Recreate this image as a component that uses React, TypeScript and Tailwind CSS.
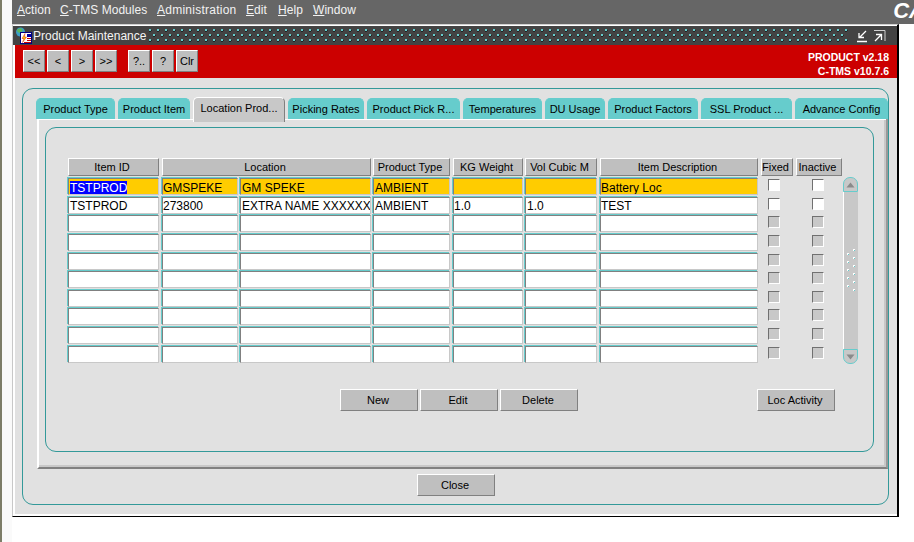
const font = "font-['Liberation_Sans',Arial,sans-serif]";

const menus = [
  { key: "A", rest: "ction", cls: "w-[43px]" },
  { key: "C", rest: "-TMS Modules", cls: "w-[97px]" },
  { key: "A", rest: "dministration", cls: "w-[89px] tracking-[0.25px]" },
  { key: "E", rest: "dit", cls: "w-[32px]" },
  { key: "H", rest: "elp", cls: "w-[35px]" },
  { key: "W", rest: "indow", cls: "w-[50px]" },
];

const navButtons = [
  ["<<", "<", ">", ">>"],
  ["?..", "?", "Clr"],
];

const tabs = [
  { label: "Product Type", cls: "w-[79px] mr-[3px]" },
  { label: "Product Item", cls: "w-[72px] mr-[3px]" },
  { label: "Location Prod...", cls: "w-[92px] mr-[3px]", active: true },
  { label: "Picking Rates", cls: "w-[76px] mr-[3px]" },
  { label: "Product Pick R...", cls: "w-[93px] mr-[3px]" },
  { label: "Temperatures", cls: "w-[79px] mr-[3px]" },
  { label: "DU Usage", cls: "w-[60px] mr-[3px]" },
  { label: "Product Factors", cls: "w-[90px] mr-[3px]" },
  { label: "SSL Product ...", cls: "w-[91px] mr-[3px]" },
  { label: "Advance Config", cls: "w-[93px]" },
];

const columns = [
  { label: "Item ID", cls: "w-[91px] mr-[3px]" },
  { label: "Location", cls: "w-[209px] mr-[2px]" },
  { label: "Product Type", cls: "w-[77px] mr-[3px]" },
  { label: "KG Weight", cls: "w-[70px] mr-[2px]" },
  { label: "Vol Cubic M", cls: "w-[72px] mr-[3px]" },
  { label: "Item Description", cls: "w-[158px] mr-[3px]" },
  { label: "Fixed", cls: "w-[32px] mr-[3px]" },
  { label: "Inactive", cls: "w-[46px]" },
];

const rows = [
  { id: "TSTPROD", code: "GMSPEKE", name: "GM SPEKE", type: "AMBIENT", kg: "", vol: "", desc: "Battery Loc", on: true, current: true },
  { id: "TSTPROD", code: "273800", name: "EXTRA NAME XXXXXXX", type: "AMBIENT", kg: "1.0", vol: "1.0", desc: "TEST", on: true },
  ...Array.from({ length: 8 }, () => ({ id: "", code: "", name: "", type: "", kg: "", vol: "", desc: "", on: false })),
];

const Btn = ({ label, cls }: { label: string; cls: string }) => (
  <button
    type="button"
    className={`flex items-center justify-center whitespace-nowrap border-t border-l border-t-white border-l-white border-b border-r border-b-[#808080] border-r-[#808080] bg-[#bfbfbf] text-[11px] leading-none text-black ${cls}`}
  >
    {label}
  </button>
);

const Cell = ({ text, current, highlight, cls }: { text: string; current?: boolean; highlight?: boolean; cls: string }) => (
  <div
    className={`h-[17px] overflow-hidden whitespace-nowrap border-t border-l border-t-[#808080] border-l-[#808080] border-r border-b border-r-[#c8c8c8] border-b-[#c8c8c8] text-[12px] leading-[15px] text-black shadow-[-1px_-1px_0_#66cccc] ${highlight ? "bg-[#ffcc00] pt-[2px]" : "bg-white pt-[1px]"} ${cls}`}
  >
    {current ? <span className="bg-[#0000ff] text-white">{text}</span> : text}
  </div>
);

const Check = ({ on, cls }: { on: boolean; cls: string }) => (
  <div className={`flex h-[17px] justify-center ${cls}`}>
    <div
      className={`mt-[1px] h-[12px] w-[12px] border-t border-l border-t-[#707070] border-l-[#707070] border-r border-b border-r-white border-b-white ${on ? "bg-white" : "bg-[#c8c8c8]"}`}
    />
  </div>
);

const ScrollEnd = ({ up }: { up?: boolean }) => (
  <div
    className={`flex h-[15px] w-[15px] items-center justify-center border border-[#66cccc] bg-[#c8c8c8] ${up ? "rounded-t-[7px] border-b-[#66cccc]" : "rounded-b-[7px]"}`}
  >
    <svg width="9" height="6" viewBox="0 0 9 6">
      <path d={up ? "M4.5 0.5 L8.5 5.5 L0.5 5.5 Z" : "M0.5 0.5 L8.5 0.5 L4.5 5.5 Z"} fill="#8a8a8a" />
    </svg>
  </div>
);

export default function App() {
  return (
    <div className={`${font} flex h-[542px] w-[914px] overflow-hidden bg-white`}>
      {/* desktop edge */}
      <div className="h-full w-[2px] bg-[#7d7d68]" />
      <div className="h-full w-[10px] bg-[#fafafa]" />

      <div className="flex min-w-0 flex-1 flex-col">
        {/* menu bar */}
        <div className="flex h-[24px] items-start overflow-hidden bg-[#666666] pl-[5px] pt-[3px] text-[12px] leading-[14px] tracking-[0.05px] text-[#f2f2f2]">
          {menus.map((m) => (
            <span key={m.key + m.rest} className={m.cls}>
              <span className="underline">{m.key}</span>
              {m.rest}
            </span>
          ))}
          <span className="ml-auto mr-[-11px] mt-[-4px] text-[22px] font-bold italic leading-[24px] tracking-[0px] text-white">
            CA
          </span>
        </div>

        {/* product maintenance window */}
        <div className="flex h-[493px] w-[887px] flex-col border-t border-l border-t-[#d0d0d0] border-l-[#c8c8c8] border-r-2 border-b border-r-black border-b-black bg-[#e1e1e1] shadow-[inset_2px_0_0_#ffffff,inset_0_-2px_0_#ffffff]">
          <div className="flex h-[20px] items-center border-t border-t-white bg-[#434343] pl-[2px] pr-[3px]">
            <svg width="17" height="18" viewBox="0 0 17 18" className="shrink-0">
              <circle cx="5.5" cy="5" r="4.5" fill="#3a9fc8" />
              <path d="M2 2.5 L6 1 L8 3.5 L5 6 L2.5 5 Z" fill="#5cb85c" />
              <rect x="5.5" y="5.5" width="11" height="11" fill="#ffffff" stroke="#000080" />
              <path d="M10 6.5 L7 11.5 L9 11.5 L7.5 15.5 L11.5 10 L9.5 10 Z" fill="#ffcc00" stroke="#cc0000" strokeWidth="0.4" />
              <rect x="12" y="7" width="4" height="3" fill="#0000aa" />
              <rect x="12" y="11" width="4" height="1" fill="#cc0000" />
              <rect x="12" y="13" width="4" height="1" fill="#cc0000" />
              <rect x="9" y="15" width="7" height="1" fill="#cc0000" />
            </svg>
            <span className="ml-[1px] w-[125px] whitespace-nowrap text-[12px] leading-none text-[#f4f4f4]">
              Product Maintenance
            </span>
            <svg className="h-[14px] w-[699px] shrink-0" aria-hidden="true">
              <defs>
                <pattern id="grip" width="8" height="14" patternUnits="userSpaceOnUse">
                  <rect x="0" y="0" width="2" height="2" fill="#66cccc" />
                  <rect x="2" y="1" width="1" height="1" fill="#222222" />
                  <rect x="0" y="2" width="2" height="1" fill="#222222" />
                  <rect x="4" y="5" width="2" height="2" fill="#66cccc" />
                  <rect x="6" y="6" width="1" height="1" fill="#222222" />
                  <rect x="4" y="7" width="2" height="1" fill="#222222" />
                  <rect x="0" y="10" width="2" height="2" fill="#66cccc" />
                  <rect x="2" y="11" width="1" height="1" fill="#222222" />
                  <rect x="0" y="12" width="2" height="1" fill="#222222" />
                </pattern>
              </defs>
              <rect width="699" height="14" fill="url(#grip)" />
            </svg>
            <svg width="38" height="16" viewBox="0 0 38 16" className="ml-[8px] shrink-0" fill="none" stroke="#ffffff">
              <path d="M10 3 L4 9 M3 5 L3 9.5 L8 9.5" strokeWidth="1.3" />
              <path d="M1 13.5 L11 13.5" strokeWidth="1.5" />
              <path d="M18 2.5 L29 2.5 L29 13" stroke="#d0d0d0" />
              <path d="M19 13 L25 7 M20 6.5 L25.5 6.5 L25.5 12" strokeWidth="1.3" />
            </svg>
          </div>

          {/* red toolbar */}
          <div className="ml-[2px] flex h-[33px] items-start bg-[#cc0000] pl-[8px] pt-[5px]">
            {navButtons.map((group, i) => (
              <div key={group[0]} className={`flex gap-[2px] ${i === 0 ? "mr-[11px]" : ""}`}>
                {group.map((b) => (
                  <Btn key={b} label={b} cls="h-[22px] w-[22px] text-[10px]" />
                ))}
              </div>
            ))}
            <div className="ml-auto mr-[8px] text-right text-[10.5px] font-bold leading-[14px] text-white">
              <div>PRODUCT v2.18</div>
              <div>C-TMS v10.7.6</div>
            </div>
          </div>

          {/* outer teal frame */}
          <div className="ml-[9px] mt-[10px] flex h-[417px] w-[867px] flex-col rounded-[11px] border border-[#339999]">
            <div className="ml-[13px] mt-[8px] flex h-[22px] w-[853px] items-end">
              {tabs.map((t) => (
                <div
                  key={t.label}
                  className={`flex items-center justify-center whitespace-nowrap rounded-t-[5px] border-t border-l border-r text-[11px] leading-none text-black ${t.cls} ${t.active ? "relative z-10 -mb-[3px] h-[25px] border-t-white border-l-white border-r-[#808080] bg-[#c8c8c8] pb-[3px]" : "h-[21px] border-[#66cccc] bg-[#66cccc]"}`}
                >
                  {t.label}
                </div>
              ))}
            </div>

            {/* tab page */}
            <div className="ml-[14px] flex h-[350px] w-[851px] flex-col border-l-2 border-r-2 border-b-2 border-l-white border-r-[#999999] border-b-[#808080] bg-[#e1e1e1] shadow-[inset_-2px_-2px_0_#c8c8c8]">
              <div className="h-[8px] w-full border-t border-t-white" />
              <div className="ml-[6px] flex h-[325px] w-[829px] flex-col rounded-[11px] border border-[#339999]">
                <div className="ml-[22px] mt-[30px] flex h-[18px]">
                  {columns.map((c) => (
                    <Btn key={c.label} label={c.label} cls={`h-[18px] pr-[3px] ${c.cls}`} />
                  ))}
                </div>

                <div className="ml-[22px] mt-[2px] flex">
                  <div className="flex w-[775px] flex-col gap-[1.65px]">
                    {rows.map((r, i) => (
                      <div key={i} className="flex">
                        <Cell text={r.id} current={r.current} highlight={r.current} cls="mr-[3px] w-[91px] pl-[1px]" />
                        <Cell text={r.code} highlight={r.current} cls="mr-[2px] w-[76px] pl-0" />
                        <Cell text={r.name} highlight={r.current} cls="mr-[2px] w-[131px] pl-[1px]" />
                        <Cell text={r.type} highlight={r.current} cls="mr-[3px] w-[77px] pl-[1px]" />
                        <Cell text={r.kg} highlight={r.current} cls="mr-[2px] w-[70px] pl-0" />
                        <Cell text={r.vol} highlight={r.current} cls="mr-[3px] w-[72px] pl-[1px]" />
                        <Cell text={r.desc} highlight={r.current} cls="mr-[3px] w-[158px] pl-0" />
                        <Check on={r.on} cls="mr-[3px] w-[32px] pr-[6px]" />
                        <Check on={r.on} cls="w-[46px] pr-[3px]" />
                      </div>
                    ))}
                  </div>
                  <div className="-mt-[1px] flex h-[187px] w-[15px] flex-col">
                    <ScrollEnd up />
                    <div className="flex flex-1 items-center justify-center border-l border-l-white bg-[#c8c8c8]">
                      <svg width="10" height="44" viewBox="0 0 10 44">
                        {[0, 8, 16, 24, 32, 40].map((y) => (
                          <g key={y}>
                            <rect x="7" y={y} width="2" height="2" fill="#ffffff" />
                            <rect x="8" y={y + 1} width="1" height="1" fill="#66cccc" />
                            <rect x="1" y={y + 4} width="2" height="2" fill="#ffffff" />
                            <rect x="2" y={y + 5} width="1" height="1" fill="#66cccc" />
                          </g>
                        ))}
                      </svg>
                    </div>
                    <ScrollEnd />
                  </div>
                </div>

                <div className="ml-[294px] mt-[25px] flex">
                  <Btn label="New" cls="mr-[2px] h-[22px] w-[78px] pr-[2px]" />
                  <Btn label="Edit" cls="mr-[2px] h-[22px] w-[78px] pr-[2px]" />
                  <Btn label="Delete" cls="h-[22px] w-[78px] pr-[2px]" />
                  <Btn label="Loc Activity" cls="ml-[179px] h-[22px] w-[78px] pr-[2px]" />
                </div>
              </div>
            </div>

            <div className="ml-[394px] mt-[5px]">
              <Btn label="Close" cls="h-[22px] w-[78px] pr-[2px]" />
            </div>
          </div>
        </div>
      </div>
    </div>
  );
}
